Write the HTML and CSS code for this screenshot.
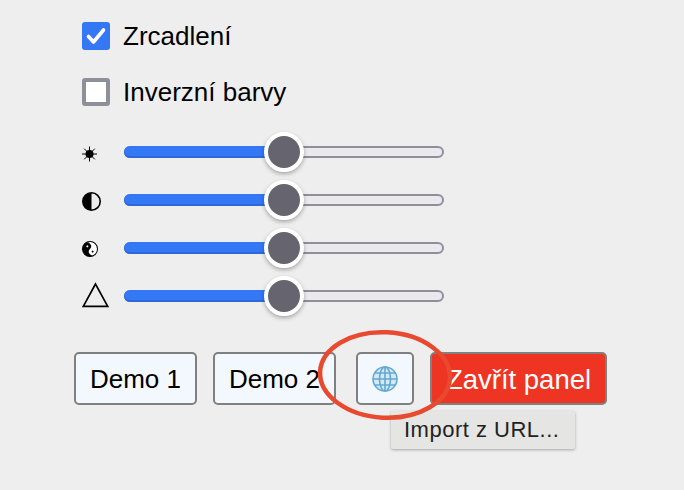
FILE: index.html
```html
<!DOCTYPE html>
<html lang="cs">
<head>
<meta charset="utf-8">
<title>Panel</title>
<link rel="stylesheet" href="styles.css">
</head>
<body>
<main class="panel">
  <label class="check-row">
    <span class="box box-on">
      <svg viewBox="0 0 28 28" width="28" height="28"><path d="M6.500 14.500l5 5.500 10-12" fill="none" stroke="#fff" stroke-width="3.600" stroke-linecap="round" stroke-linejoin="round"/></svg>
    </span>
    <span>Zrcadlení</span>
  </label>
  <label class="check-row">
    <span class="box box-off"></span>
    <span>Inverzní barvy</span>
  </label>
  <div class="sliders">
    <div class="slider-row">
      <span class="s-icon"><svg viewBox="0 0 28 28" width="28" height="28"><g stroke="#000" stroke-width="1"><path d="M7.500 8.500v15M0 16h15M2.200 10.700l10.600 10.600M12.800 10.700L2.200 21.300"/></g><circle cx="7.500" cy="16" r="4" fill="#000"/></svg></span>
      <div class="track"><div class="fill"></div><div class="thumb"></div></div>
    </div>
    <div class="slider-row">
      <span class="s-icon"><svg viewBox="0 0 28 28" width="28" height="28"><circle cx="9.500" cy="15.500" r="8.700" fill="none" stroke="#000" stroke-width="1.600"/><path d="M9.500 6.800a8.700 8.700 0 0 0 0 17.400z" fill="#000"/></svg></span>
      <div class="track"><div class="fill"></div><div class="thumb"></div></div>
    </div>
    <div class="slider-row">
      <span class="s-icon"><svg viewBox="0 0 28 28" width="28" height="28"><g transform="translate(8 15) rotate(-45)"><circle r="7.500" fill="#fff" stroke="#000" stroke-width="1"/><path d="M0-7.500a7.500 7.500 0 0 0 0 15a3.750 3.750 0 0 1 0-7.500a3.750 3.750 0 0 0 0-7.500z" fill="#000"/><circle cy="-3.750" r="1" fill="#fff"/><circle cy="3.750" r="1" fill="#000"/></g></svg></span>
      <div class="track"><div class="fill"></div><div class="thumb"></div></div>
    </div>
    <div class="slider-row">
      <span class="s-icon"><svg viewBox="0 0 28 28" width="28" height="28"><path d="M13.500 2L1.300 24.400h24.400z" fill="none" stroke="#000" stroke-width="1.700"/></svg></span>
      <div class="track"><div class="fill"></div><div class="thumb"></div></div>
    </div>
  </div>
  <div class="buttons">
    <button class="btn btn-demo">Demo 1</button>
    <button class="btn btn-demo btn-two">Demo 2</button>
    <button class="btn btn-globe">
      <svg viewBox="0 0 28 28" width="28" height="28" fill="none" stroke="#63a9d2" stroke-width="1.600"><circle cx="14" cy="14" r="12" fill="#d5e9f5"/><ellipse cx="14" cy="14" rx="5.500" ry="12"/><path d="M14 2v24M2 14h24M4 8h20M4 20h20"/></svg>
    </button>
    <button class="btn btn-close">Zavřít panel</button>
  </div>
</main>
<div class="tooltip">Import z URL...</div>
<svg class="circle" viewBox="0 0 150 110" width="150" height="110"><ellipse cx="75" cy="55" rx="65" ry="42.700" transform="rotate(3 75 55)" fill="none" stroke="#e8492f" stroke-width="4.500"/></svg>
</body>
</html>
```
FILE: styles.css
```css
html, body {
  margin: 0;
  height: 100%;
}
body {
  background: #eeeeee;
  font-family: "Liberation Sans", Arial, sans-serif;
  color: #000;
  overflow: hidden;
  position: relative;
}
.panel {
  padding: 22px 0 0 74px;
}
.check-row {
  display: flex;
  align-items: center;
  gap: 13px;
  height: 28px;
  margin: 0 0 28px 8px;
  font-size: 26px;
}
.box {
  width: 28px;
  height: 28px;
  box-sizing: border-box;
  border-radius: 3px;
  display: block;
  flex: none;
}
.box-on {
  background: #3478f6;
}
.box-on svg {
  display: block;
}
.box-off {
  background: #fff;
  border: 4px solid #8f8e9b;
}
.sliders {
  display: flex;
  flex-direction: column;
  gap: 28px;
  margin: 36px 0 0 8px;
}
.slider-row {
  display: flex;
  align-items: center;
  gap: 14px;
  height: 20px;
}
.s-icon {
  width: 28px;
  height: 28px;
  flex: none;
}
.s-icon svg {
  display: block;
}
.track {
  position: relative;
  width: 320px;
  height: 12px;
  box-sizing: border-box;
  background: #e9e9ee;
  border: 2px solid #8f8e9b;
  border-radius: 6px;
}
.fill {
  position: absolute;
  left: -2px;
  top: -2px;
  width: 150px;
  height: 12px;
  background: #3478f6;
  border-radius: 6px 0 0 6px;
  box-shadow: inset 0 -2px 0 #2d68d8;
}
.thumb {
  position: absolute;
  left: 138px;
  top: -16px;
  width: 40px;
  height: 40px;
  box-sizing: border-box;
  background: #66656f;
  border: 4px solid #fff;
  border-radius: 50%;
  box-shadow: 0 2px 4px rgba(0, 0, 0, 0.3);
}
.buttons {
  display: flex;
  gap: 16px;
  margin-top: 46px;
}
.btn {
  height: 53px;
  box-sizing: border-box;
  border: 2px solid #808080;
  border-radius: 5px;
  background: #f3f8ff;
  font-family: inherit;
  font-size: 26px;
  color: #000;
  padding: 2px 0 0;
}
.btn-demo {
  width: 123px;
}
.btn-two {
  margin-right: 4px;
}
.btn-globe {
  width: 58px;
  display: flex;
  align-items: center;
  justify-content: center;
  padding: 0;
}
.btn-close {
  width: 177px;
  background: #ee3524;
  color: #fff;
  font-size: 27.500px;
}
.tooltip {
  position: absolute;
  left: 391px;
  top: 411px;
  width: 184px;
  height: 38px;
  box-sizing: border-box;
  padding-left: 13px;
  background: #e5e5e3;
  border-radius: 2px;
  box-shadow: 0 1px 3px rgba(0, 0, 0, 0.3);
  font-size: 22px;
  line-height: 38px;
  letter-spacing: 0.5px;
  color: #222;
}
.circle {
  position: absolute;
  left: 310px;
  top: 320px;
}
```
